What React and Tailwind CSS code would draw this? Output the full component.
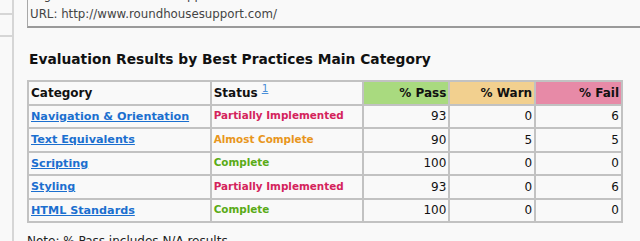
export default function App() {
  const rows = [
    { cat: "Navigation & Orientation", status: "Partially Implemented", sc: "text-[#d4245c]", p: 93, w: 0, f: 6 },
    { cat: "Text Equivalents", status: "Almost Complete", sc: "text-[#e8961c]", p: 90, w: 5, f: 5 },
    { cat: "Scripting", status: "Complete", sc: "text-[#5aab16]", p: 100, w: 0, f: 0 },
    { cat: "Styling", status: "Partially Implemented", sc: "text-[#d4245c]", p: 93, w: 0, f: 6 },
    { cat: "HTML Standards", status: "Complete", sc: "text-[#5aab16]", p: 100, w: 0, f: 0 },
  ];
  const td = "border border-[#c2c2c2] px-[2px] h-[23.5px] py-0";
  return (
    <div className="w-[640px] h-[241px] overflow-hidden bg-[#f9f9f9] flex text-[#111] font-['DejaVu_Sans',sans-serif]">
      <div className="w-[14px] shrink-0 border-r-2 border-[#d6d6d6] flex flex-col">
        <div className="h-[15px] border-b-2 border-[#d6d6d6]"></div>
        <div className="h-[22px] border-b-2 border-[#d6d6d6]"></div>
      </div>
      <div className="flex-1 pl-[13px]">
        <div className="border-l border-[#a8a8a8] border-b-2 border-b-[#9a9a9a] pl-[2px] -mt-[14px] pb-[2px] text-[11.8px] leading-[19px] text-[#444]">
          <div>Page Title: Roundhouse Support (Home)</div>
          <div>URL: http://www.roundhousesupport.com/</div>
        </div>
        <h2 className="mt-[22px] ml-[2px] text-[13.8px] font-bold leading-[18px] text-[#111]">
          Evaluation Results by Best Practices Main Category
        </h2>
        <table className="mt-[12px] border border-[#c2c2c2] border-separate border-spacing-0 text-[12px] w-[596px]">
          <thead>
            <tr className="font-bold">
              <td className={`${td} w-[183px] text-left`}>Category</td>
              <td className={`${td} w-[153px] text-left`}>
                Status <sup className="text-[#4a8fd8] font-normal text-[10.5px] underline">1</sup>
              </td>
              <td className={`${td} w-[86px] text-right bg-[#a9da7f]`}>% Pass</td>
              <td className={`${td} w-[86px] text-right bg-[#f2d08f]`}>% Warn</td>
              <td className={`${td} w-[87px] text-right bg-[#e78aa7]`}>% Fail</td>
            </tr>
          </thead>
          <tbody>
            {rows.map((r) => (
              <tr key={r.cat}>
                <td className={td}>
                  <a href="#" className="font-bold text-[11.2px] text-[#1b6fcf] underline">{r.cat}</a>
                </td>
                <td className={`${td} font-bold text-[10.4px] ${r.sc}`}>{r.status}</td>
                <td className={`${td} text-right`}>{r.p}</td>
                <td className={`${td} text-right`}>{r.w}</td>
                <td className={`${td} text-right`}>{r.f}</td>
              </tr>
            ))}
          </tbody>
        </table>
        <div className="mt-[9px] text-[12px] text-[#222]">Note: % Pass includes N/A results</div>
      </div>
    </div>
  );
}
